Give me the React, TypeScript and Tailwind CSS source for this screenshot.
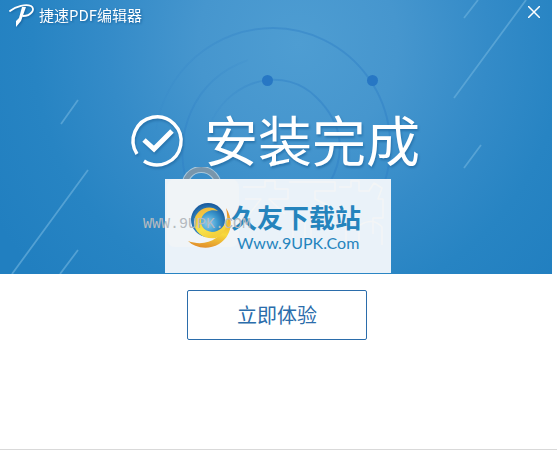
function Arcs() {
    return (
        <svg viewBox="0 0 552 274" preserveAspectRatio="xMidYMin slice" className="absolute inset-0 w-full h-full" fill="none" aria-hidden="true">
            <defs>
                <linearGradient id="arcFade" x1="0" y1="0" x2="1" y2="0">
                    <stop offset="0" stopColor="#2f80c6" stopOpacity="0.1" />
                    <stop offset="0.5" stopColor="#2f80c6" stopOpacity="0.45" />
                    <stop offset="1" stopColor="#2f80c6" stopOpacity="0.5" />
                </linearGradient>
                <linearGradient id="midFade" x1="0" y1="1" x2="1" y2="0">
                    <stop offset="0" stopColor="#2f80c6" stopOpacity="0.5" />
                    <stop offset="1" stopColor="#2f80c6" stopOpacity="0.1" />
                </linearGradient>
            </defs>
            <g strokeWidth="2">
                <path d="M156 130A118 118 0 0 1 273 28A118 118 0 0 1 384 184" stroke="url(#arcFade)" />
                <path d="M187 184C173 135 192 80 248 60" stroke="url(#midFade)" />
                <path d="M212 120C234 77 286 67 316 97C344 124 346 155 329 184" stroke="url(#arcFade)" />
            </g>
            <g fill="#2777c4">
                <circle cx="267.5" cy="80.5" r="5.5" />
                <circle cx="372.5" cy="80.5" r="5.5" />
            </g>
            <g stroke="#63abd9" strokeOpacity="0.75" strokeWidth="1.8">
                <path d="M478 0L464 18M526 0L454 98M481 145L464 168M78 100L61 124M88 170L12 274M78 250L60 274" />
            </g>
        </svg>
    );
}

function SiteMark() {
    return (
        <svg viewBox="0 0 48 50" className="w-12 h-[50px] shrink-0" fill="none" aria-hidden="true">
            <defs>
                <radialGradient id="globe" cx="0.5" cy="0.6" r="0.6">
                    <stop offset="0" stopColor="#8dd2f0" />
                    <stop offset="0.5" stopColor="#3b97cd" />
                    <stop offset="1" stopColor="#17569a" />
                </radialGradient>
                <linearGradient id="swirl" x1="0.6" y1="0" x2="0.4" y2="1">
                    <stop offset="0" stopColor="#e98f2c" />
                    <stop offset="0.6" stopColor="#f7d93c" />
                    <stop offset="1" stopColor="#e2902b" />
                </linearGradient>
                <linearGradient id="inner" x1="0" y1="0" x2="0.4" y2="1">
                    <stop offset="0" stopColor="#f0b13a" />
                    <stop offset="0.7" stopColor="#f7e34a" />
                    <stop offset="1" stopColor="#f4cf3c" />
                </linearGradient>
            </defs>
            <circle cx="23" cy="19" r="17" fill="url(#globe)" />
            <path d="M41 7C49 19 47 35 34 43C22 50 9 46 3 40C14 44 24 42 31 37C41 30 44 19 41 7Z" fill="url(#swirl)" />
            <path d="M33 10C24 2 10 9 9 21C9 32 20 39 31 37C38 34 43 26 43 15C40 26 34 31 27 31C18 30 14 23 17 16C20 10 27 8 33 10Z" fill="url(#inner)" />
        </svg>
    );
}

function App() {
    return (
        <div className="min-h-screen flex flex-col bg-white font-['Noto_Sans_CJK_SC',sans-serif]">
            <header className="relative flex flex-col h-[274px] mr-[5px] overflow-hidden bg-[radial-gradient(circle_at_54%_16%,#4e9dd2_0px,#4696ce_100px,#348bc8_190px,#2784c3_265px,#217fc0_350px)]">
                <Arcs />
                <div className="relative flex justify-between items-start text-white">
                    <div className="flex items-start gap-1 pl-2 pt-1 drop-shadow-[1px_1px_1px_#1764a0]">
                        <svg viewBox="0 0 27 24" className="w-[27px] h-6" fill="none" aria-hidden="true">
                            <path d="M2 7C8 2 18 0 23 2C28 5 23 12 15 12" stroke="#fff" strokeWidth="1.8" strokeLinecap="round" />
                            <path d="M14 3L18 3L13 17L8 23L8 17L11 14Z" fill="#fff" />
                        </svg>
                        <h1 className="text-[15px] leading-[22px]">捷速PDF编辑器</h1>
                    </div>
                    <button type="button" aria-label="关闭" className="px-3 py-1.5 hover:bg-white/20 cursor-pointer">
                        <svg viewBox="0 0 12 12" className="w-3 h-3" stroke="#fff" strokeWidth="1.5">
                            <path d="M0 0L12 12M12 0L0 12" />
                        </svg>
                    </button>
                </div>
                <div className="relative flex justify-center items-center gap-5 mt-[72px] text-white drop-shadow-[1px_2px_1px_#2874ad]">
                    <svg viewBox="0 0 52 52" className="w-[52px] h-[52px] overflow-visible" fill="none" stroke="#fff" aria-hidden="true">
                        <path d="M5 39A24 24 0 1 1 12 46" strokeWidth="3.5" />
                        <path d="M12 25L22 34L40 16" strokeWidth="5" />
                    </svg>
                    <h2 className="pb-1 text-[54px] leading-[78px]">安装完成</h2>
                </div>
                <svg viewBox="0 0 42 26" className="absolute left-[181px] top-[167px] w-[42px] h-[26px]" fill="none" aria-hidden="true">
                    <path d="M4 25C0 -5 40 -5 38 25" stroke="#a9c8dc" strokeWidth="7" />
                    <path d="M4 25C0 -5 40 -5 38 25" stroke="#7896ac" strokeWidth="5" />
                </svg>
                <div className="absolute left-[165px] top-[179px] w-[226px] h-[94px] overflow-hidden bg-[#eaf2f9]">
                    <div className="absolute left-0.5 top-0 w-[72px] h-[68px] rounded-lg bg-[#f0f4f7]"></div>
                    <svg viewBox="0 0 226 94" className="absolute inset-0" fill="none" stroke="#f3f5f6" strokeWidth="1.5" strokeLinejoin="round" aria-hidden="true">
                        <path d="M78 8H100V2H110V10H123V20H104L120 35M80 20H96L82 38M124 3H170V12H150V20L166 28L160 36L146 28V62M174 8H186V2H194V12H204L209 4L217 9L213 20H218V39H208V55M128 62V43H140V62M181 62V45Q190 38 194 46V62M195 46Q208 38 217 48V66" />
                    </svg>
                    <div className="absolute left-5 top-[22px] flex items-start">
                        <SiteMark />
                        <div className="-ml-0.5 text-[#2584bd]">
                            <p className="text-[26px] leading-8 font-bold">久友下载站</p>
                            <p className="pl-1.5 text-base leading-5 font-['Lato',sans-serif]">Www.9UPK.Com</p>
                        </div>
                    </div>
                </div>
                <p className="absolute left-[143px] top-[216px] text-[15px] leading-[18px] text-[#b5bac0] font-['Liberation_Mono',monospace]">WWW.9UPK.COM</p>
            </header>
            <main className="flex-1 flex flex-col items-center pt-4 mr-[3px]">
                <button type="button" className="w-[180px] h-[50px] border border-[#2b6dab] rounded-xs text-xl text-[#2b6dab] hover:bg-blue-50 cursor-pointer">
                    立即体验
                </button>
            </main>
            <footer className="h-[3px] border-t border-[#d9d9d9]"></footer>
        </div>
    );
}

export default App;
